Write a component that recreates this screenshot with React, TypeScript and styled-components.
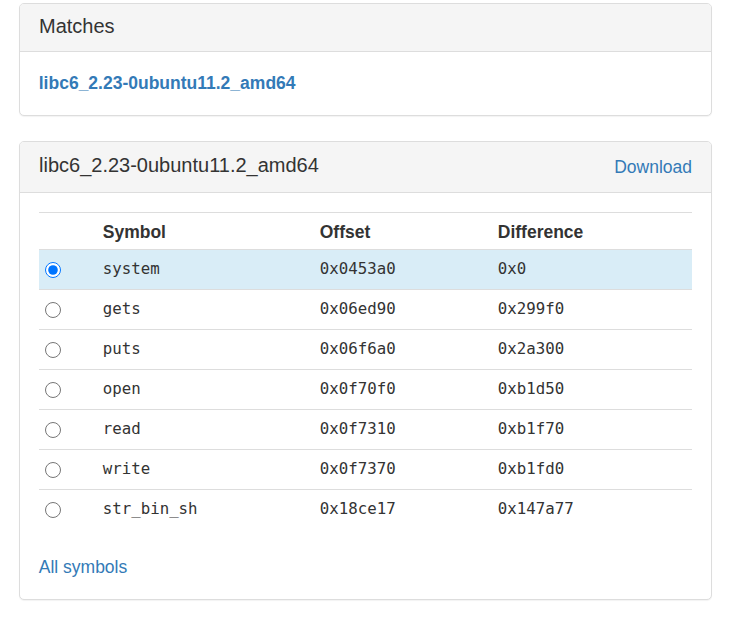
import React from "react";
import styled, { createGlobalStyle } from "styled-components";

const GlobalStyle = createGlobalStyle`
  html, body {
    margin: 0;
    padding: 0;
    background: #fff;
  }
  body {
    font-family: "Liberation Sans", Arial, Helvetica, sans-serif;
    font-size: 17.5px;
    line-height: 1.42857;
    color: #333;
  }
  * { box-sizing: border-box; }
`;

const Page = styled.div`
  padding: 3px 25px 0 19px;
`;

const Panel = styled.section`
  background: #fff;
  border: 1px solid #ddd;
  border-radius: 5px;
  box-shadow: 0 1px 1px rgba(0, 0, 0, 0.05);
  margin-bottom: 25px;
`;

const PanelHeading = styled.div<{ $raised?: boolean }>`
  display: flex;
  align-items: flex-start;
  justify-content: space-between;
  background: #f5f5f5;
  border-bottom: 1px solid #ddd;
  border-radius: 4px 4px 0 0;
  padding: ${(p) => (p.$raised ? "11px 19px 14px 19px" : "12.5px 19px 12.5px 19px")};
`;

const PanelTitle = styled.h3`
  margin: 0;
  font-size: 20px;
  line-height: 22px;
  font-weight: normal;
  color: #333;
`;

const PanelBody = styled.div<{ $top?: number }>`
  padding: 18.75px;
  padding-top: ${(p) => (p.$top ? `${p.$top}px` : "18.75px")};
`;

const Link = styled.a<{ $bold?: boolean }>`
  color: #337ab7;
  text-decoration: none;
  font-weight: ${(p) => (p.$bold ? "bold" : "normal")};
  line-height: 25px;
  cursor: pointer;
`;

const HeadingLink = styled(Link)`
  line-height: 26px;
  margin-bottom: -1px;
`;

const Table = styled.table`
  width: 100%;
  table-layout: fixed;
  border-collapse: separate;
  border-spacing: 0;
  margin-bottom: 26px;
`;

const Col = styled.col<{ $w?: number }>`
  width: ${(p) => (p.$w ? `${p.$w}px` : "auto")};
`;

const HeadCell = styled.th`
  text-align: left;
  font-weight: bold;
  padding: 6.5px 10px 5.5px 10px;
  line-height: 24px;
  border-top: 1px solid #ddd;
  border-bottom: 1px solid #ddd;
`;

const Row = styled.tr<{ $active?: boolean }>`
  background: ${(p) => (p.$active ? "#d9edf7" : "transparent")};
`;

const Cell = styled.td<{ $last?: boolean; $mono?: boolean }>`
  padding: 7px 10px 8px 10px;
  line-height: 24px;
  border-bottom: ${(p) => (p.$last ? "none" : "1px solid #ddd")};
  font-family: ${(p) =>
    p.$mono ? '"DejaVu Sans Mono", "Liberation Mono", monospace' : "inherit"};
  font-size: ${(p) => (p.$mono ? "15.75px" : "inherit")};
  color: #333;
  vertical-align: middle;
`;

const RadioCell = styled(Cell)`
  padding: 8px 10px 7px 6px;
`;

const Radio = styled.input`
  width: 16px;
  height: 16px;
  margin: 0;
  display: block;
`;

const symbols = [
  { name: "system", offset: "0x0453a0", diff: "0x0" },
  { name: "gets", offset: "0x06ed90", diff: "0x299f0" },
  { name: "puts", offset: "0x06f6a0", diff: "0x2a300" },
  { name: "open", offset: "0x0f70f0", diff: "0xb1d50" },
  { name: "read", offset: "0x0f7310", diff: "0xb1f70" },
  { name: "write", offset: "0x0f7370", diff: "0xb1fd0" },
  { name: "str_bin_sh", offset: "0x18ce17", diff: "0x147a77" },
];

export default function App() {
  const [selected, setSelected] = React.useState("system");
  return (
    <>
      <GlobalStyle />
      <Page>
        <Panel>
          <PanelHeading $raised>
            <PanelTitle>Matches</PanelTitle>
          </PanelHeading>
          <PanelBody>
            <Link $bold>libc6_2.23-0ubuntu11.2_amd64</Link>
          </PanelBody>
        </Panel>
        <Panel>
          <PanelHeading>
            <PanelTitle>libc6_2.23-0ubuntu11.2_amd64</PanelTitle>
            <HeadingLink>Download</HeadingLink>
          </PanelHeading>
          <PanelBody $top={19.75}>
            <Table>
              <colgroup>
                <Col $w={54} />
                <Col $w={217} />
                <Col $w={178} />
                <Col />
              </colgroup>
              <thead>
                <tr>
                  <HeadCell />
                  <HeadCell>Symbol</HeadCell>
                  <HeadCell>Offset</HeadCell>
                  <HeadCell>Difference</HeadCell>
                </tr>
              </thead>
              <tbody>
                {symbols.map((s, i) => {
                  const last = i === symbols.length - 1;
                  return (
                    <Row key={s.name} $active={s.name === selected}>
                      <RadioCell $last={last}>
                        <Radio
                          type="radio"
                          name="symbol"
                          checked={s.name === selected}
                          onChange={() => setSelected(s.name)}
                        />
                      </RadioCell>
                      <Cell $last={last} $mono>{s.name}</Cell>
                      <Cell $last={last} $mono>{s.offset}</Cell>
                      <Cell $last={last} $mono>{s.diff}</Cell>
                    </Row>
                  );
                })}
              </tbody>
            </Table>
            <Link>All symbols</Link>
          </PanelBody>
        </Panel>
      </Page>
    </>
  );
}
